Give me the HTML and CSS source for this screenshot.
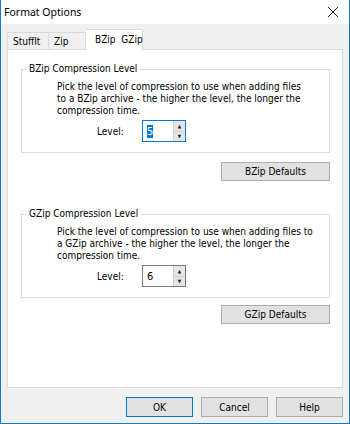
FILE: index.html
```
<!DOCTYPE html>
<html lang="en">
<head>
  <meta charset="UTF-8" />
  <title>Format Options</title>
  <link rel="stylesheet" href="styles.css">
</head>
<body>
  <div class="window">
    <div class="titlebar">
      <span class="title">Format Options</span>
      <svg class="close" width="12" height="12" viewBox="0 0 12 12">
        <path d="M1 1 L11 11 M11 1 L1 11" stroke="#222" stroke-width="1" fill="none"/>
      </svg>
    </div>
    <div class="dialog">
      <div class="tabs">
        <div class="tab tab-stuffit">StuffIt</div>
        <div class="tab tab-zip">Zip</div>
        <div class="tab tab-active">BZip&nbsp; GZip</div>
      </div>
      <div class="panel">
        <fieldset class="group">
          <legend>BZip Compression Level</legend>
          <p class="desc">Pick the level of compression to use when adding files<br>to a BZip archive - the higher the level, the longer the<br>compression time.</p>
          <div class="level-row">
            <span class="level-label">Level:</span>
            <div class="spin focused">
              <div class="spin-field"><span class="sel">5</span></div>
              <div class="spin-btns">
                <div class="spin-btn">&#9650;</div>
                <div class="spin-btn">&#9660;</div>
              </div>
            </div>
          </div>
        </fieldset>
        <div class="defaults-row">
          <button class="btn btn-defaults">BZip Defaults</button>
        </div>
        <fieldset class="group group-gzip">
          <legend>GZip Compression Level</legend>
          <p class="desc">Pick the level of compression to use when adding files to<br>a GZip archive - the higher the level, the longer the<br>compression time.</p>
          <div class="level-row">
            <span class="level-label">Level:</span>
            <div class="spin">
              <div class="spin-field">6</div>
              <div class="spin-btns">
                <div class="spin-btn">&#9650;</div>
                <div class="spin-btn">&#9660;</div>
              </div>
            </div>
          </div>
        </fieldset>
        <div class="defaults-row defaults-gzip">
          <button class="btn btn-defaults">GZip Defaults</button>
        </div>
      </div>
      <div class="bottom-row">
        <button class="btn btn-main btn-ok">OK</button>
        <button class="btn btn-main">Cancel</button>
        <button class="btn btn-main">Help</button>
      </div>
    </div>
  </div>
</body>
</html>
```
FILE: styles.css
```
* {
  box-sizing: border-box;
}
body {
  margin: 0;
  background: #f0f0f0;
}
.window {
  width: 350px;
  height: 424px;
  border: 1px solid #1a78c8;
  border-top: none;
  background: #f0f0f0;
  font-family: "DejaVu Sans Condensed", "DejaVu Sans", sans-serif;
  font-stretch: condensed;
  font-size: 10px;
  color: #000;
}
.titlebar {
  height: 24px;
  background: #fff;
  display: flex;
  align-items: center;
  justify-content: space-between;
  padding: 0 10px 0 3px;
}
.title {
  font-family: "Noto Sans", sans-serif;
  font-stretch: normal;
  font-size: 10.5px;
  color: #000;
}
.dialog {
  padding: 5px 6px 0 6px;
}
.tabs {
  display: flex;
  align-items: flex-end;
  height: 20px;
}
.tab {
  height: 17px;
  border: 1px solid #d9d9d9;
  border-bottom: none;
  background: #f0f0f0;
  padding: 3px 0 0 5px;
  white-space: nowrap;
}
.tab-stuffit {
  width: 42px;
}
.tab-zip {
  width: 37px;
  border-left: none;
}
.tab-active {
  width: 57px;
  height: 21px;
  margin-bottom: -1px;
  background: #fff;
  border-left: none;
  padding: 4px 0 0 9px;
  position: relative;
}
.panel {
  height: 339px;
  background: #fff;
  border: 1px solid #d9d9d9;
  padding: 13px 12px 0 13px;
}
.group {
  margin: 0;
  border: 1px solid #dcdcdc;
  padding: 0 0 9px 0;
  height: 90px;
}
.group legend {
  padding: 0 2px;
  margin-left: 5px;
  line-height: 12px;
}
.desc {
  margin: 6px 0 0 35px;
  line-height: 12px;
}
.level-row {
  display: flex;
  align-items: center;
  margin-top: 3px;
}
.level-label {
  width: 45px;
  margin-left: 75px;
}
.spin {
  display: flex;
  width: 44px;
  height: 22px;
  border: 1px solid #7a7a7a;
}
.spin.focused {
  border-color: #0078d7;
}
.spin-field {
  flex: 1;
  padding: 4px 0 0 4px;
  font-size: 11px;
}
.sel {
  background: #0078d7;
  color: #fff;
}
.spin-btns {
  width: 12px;
  display: flex;
  flex-direction: column;
  background: #e5e5e5;
  border-left: 1px solid #d0d0d0;
}
.spin-btn {
  flex: 1;
  font-size: 5px;
  display: flex;
  align-items: center;
  justify-content: center;
  color: #222;
}
.spin-btn + .spin-btn {
  border-top: 1px solid #d0d0d0;
}
.defaults-row {
  display: flex;
  justify-content: flex-end;
  margin-top: 9px;
  height: 46px;
}
.btn {
  font-family: inherit;
  font-stretch: condensed;
  font-size: 10px;
  background: #e1e1e1;
  border: 1px solid #adadad;
  padding: 0;
  color: #000;
}
.btn-defaults {
  width: 109px;
  height: 19px;
}
.defaults-gzip {
  margin-top: 7px;
}
.bottom-row {
  display: flex;
  justify-content: flex-end;
  gap: 8px;
  margin-top: 9px;
}
.btn-main {
  width: 67px;
  height: 20px;
}
.btn-ok {
  border-color: #0078d7;
}
```
